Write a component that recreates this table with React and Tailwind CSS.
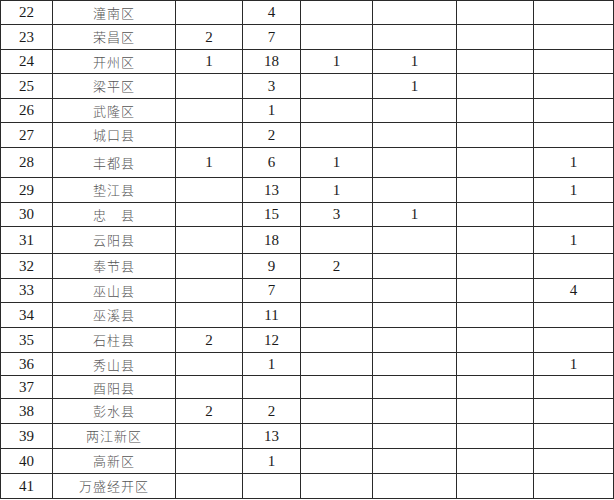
import React from "react";

const rows = [
  ["22", "潼南区", "", "4", "", "", "", "", 24],
  ["23", "荣昌区", "2", "7", "", "", "", "", 25],
  ["24", "开州区", "1", "18", "1", "1", "", "", 24],
  ["25", "梁平区", "", "3", "", "1", "", "", 25],
  ["26", "武隆区", "", "1", "", "", "", "", 24],
  ["27", "城口县", "", "2", "", "", "", "", 25],
  ["28", "丰都县", "1", "6", "1", "", "", "1", 30],
  ["29", "垫江县", "", "13", "1", "", "", "1", 25],
  ["30", "忠\u3000县", "", "15", "3", "1", "", "", 24],
  ["31", "云阳县", "", "18", "", "", "", "1", 27],
  ["32", "奉节县", "", "9", "2", "", "", "", 25],
  ["33", "巫山县", "", "7", "", "", "", "4", 24],
  ["34", "巫溪县", "", "11", "", "", "", "", 25],
  ["35", "石柱县", "2", "12", "", "", "", "", 25],
  ["36", "秀山县", "", "1", "", "", "", "1", 23],
  ["37", "酉阳县", "", "", "", "", "", "", 23],
  ["38", "彭水县", "2", "2", "", "", "", "", 25],
  ["39", "两江新区", "", "13", "", "", "", "", 25],
  ["40", "高新区", "", "1", "", "", "", "", 25],
  ["41", "万盛经开区", "", "", "", "", "", "", 25],
];

export default function App() {
  return (
    <div className="w-[614px] h-[500px] bg-white overflow-hidden">
      <div className="w-[614px] border-t border-l border-r border-[#2a2a2a]">
        {rows.map((r) => (
          <div
            key={r[0]}
            className="grid grid-cols-[52px_123px_67px_58px_72px_84px_77px_79px] border-b border-[#2a2a2a]"
            style={{ height: r[8] }}
          >
            {r.slice(0, 8).map((c, i) => (
              <div
                key={i}
                className={
                  "flex items-center justify-center " +
                  (i < 7 ? "border-r border-[#2a2a2a] " : "") +
                  (i === 1
                    ? "text-[13px] tracking-[1px] text-[#555] font-['Noto_Sans_CJK_SC',sans-serif] font-light"
                    : "text-[15px] text-[#1a1a1a] font-['Liberation_Serif',serif]")
                }
              >
                {c}
              </div>
            ))}
          </div>
        ))}
      </div>
    </div>
  );
}
